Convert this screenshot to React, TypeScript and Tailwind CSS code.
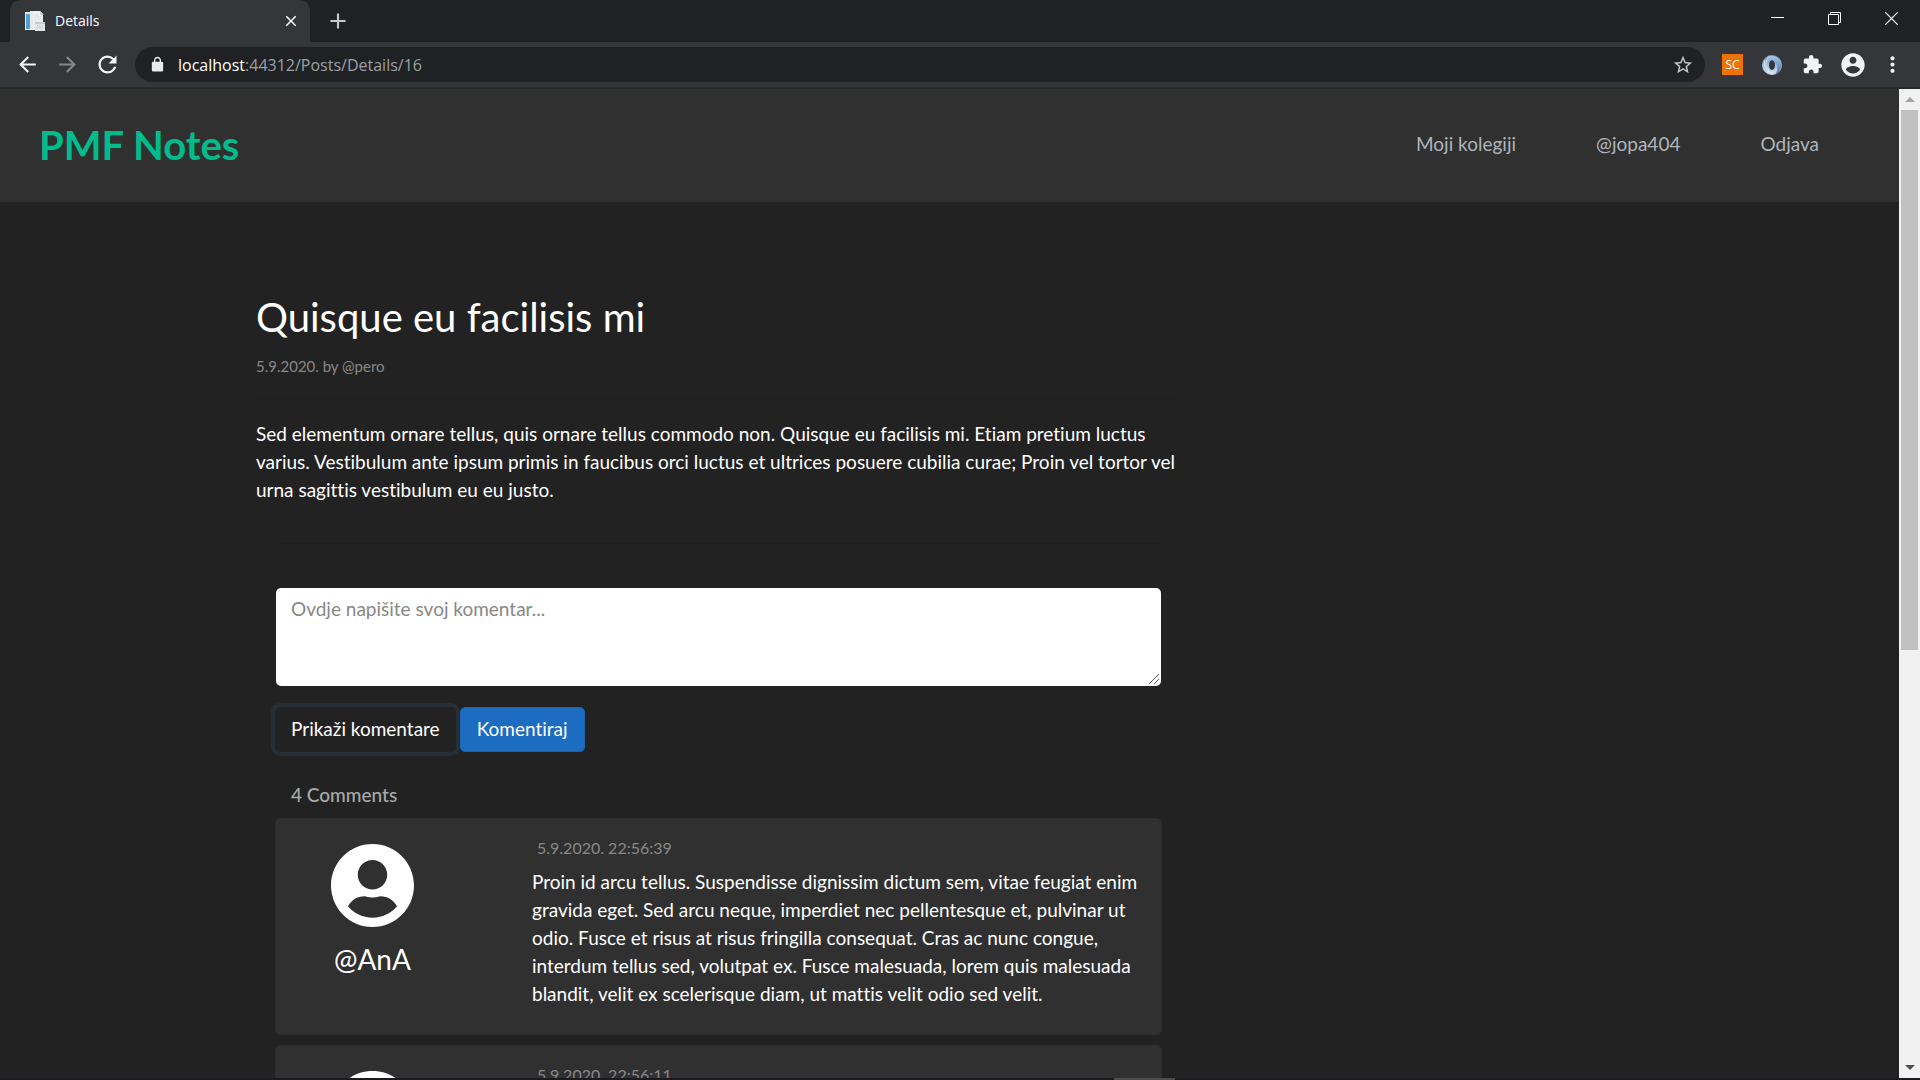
import React from "react";
import {
  MdArrowBack,
  MdArrowForward,
  MdRefresh,
  MdLock,
  MdStarBorder,
  MdExtension,
  MdMoreVert,
  MdClose,
  MdAdd,
} from "react-icons/md";

const comments = [
  {
    author: "@AnA",
    date: "5.9.2020. 22:56:39",
    text: "Proin id arcu tellus. Suspendisse dignissim dictum sem, vitae feugiat enim gravida eget. Sed arcu neque, imperdiet nec pellentesque et, pulvinar ut odio. Fusce et risus at risus fringilla consequat. Cras ac nunc congue, interdum tellus sed, volutpat ex. Fusce malesuada, lorem quis malesuada blandit, velit ex scelerisque diam, ut mattis velit odio sed velit.",
  },
  { author: "@AnA", date: "5.9.2020. 22:56:11", text: "" },
];

function Favicon() {
  return (
    <svg viewBox="0 0 20 20" className="size-5" aria-hidden="true">
      <rect x="0" y="1" width="8" height="18" fill="#e4ecf1" />
      <rect x="1" y="3" width="4" height="15" fill="#4d9fd6" />
      <path d="M5 0h10l3 3v16H5z" fill="#eeeff1" />
      <path d="M7 1v17" stroke="#dcdfe3" />
      <path d="M15 0v4h4" fill="#cfd2d6" />
      <path d="M9 4h5M9 6h8M9 8h8M9 10h2" stroke="#dcdfe3" />
      <path d="M10 11h10v9H10z" fill="#e1e3e6" />
      <path d="M10 11h10v2H10z" fill="#c6cace" />
      <path d="M12 15h6M12 17h6" stroke="#cdd1d5" />
    </svg>
  );
}

function Swirl() {
  return (
    <svg viewBox="0 0 20 20" className="size-5" aria-hidden="true">
      <defs>
        <linearGradient id="swirlA" x1="0" y1="0" x2="0" y2="1">
          <stop offset="0" stopColor="#aac6e4" />
          <stop offset="1" stopColor="#4a76a8" />
        </linearGradient>
        <linearGradient id="swirlB" x1="0" y1="0" x2="0" y2="1">
          <stop offset="0" stopColor="#6f98c6" />
          <stop offset="1" stopColor="#d5e4f3" />
        </linearGradient>
      </defs>
      <path
        fillRule="evenodd"
        d="M10 0a10 10 0 1 1 0 20a10 10 0 1 1 0-20zM10 5c-2 0-3 2.300-3 5s1 5 3 5 3-2.300 3-5-1-5-3-5z"
        fill="url(#swirlB)"
      />
      <path d="M6 1C12 0 20 3 19.600 11c-.5 4-3 7-6.600 8.300C17 15 15 9 13 8c-1-3-4-4-6-1C5 5 5 3 6 1z" fill="url(#swirlA)" />
      <path d="M3 5c-2 6 1 12 8 13M6 3c-3 4-3 9 1 12" stroke="#e3eefa" strokeWidth="1" fill="none" opacity=".7" />
    </svg>
  );
}

function TabBar() {
  return (
    <header className="flex h-[42px] shrink-0 justify-between bg-[#202124] pl-[10px]">
      <div className="flex">
        <div className="flex w-[300px] items-center rounded-t-[10px] bg-[#35363a] pr-[10px] pl-[15px]">
          <Favicon />
          <span className="ml-[10px] grow pb-[2px] text-[14px] text-white">Details</span>
          <button aria-label="Close tab" className="text-[18px] text-white">
            <MdClose className="stroke-current" />
          </button>
        </div>
        <button aria-label="New tab" className="ml-[15px] text-[26px] text-[#c4c7cb]">
          <MdAdd />
        </button>
      </div>
      <div className="flex pb-[5px] text-white">
        <button aria-label="Minimize" className="flex w-[57px] items-center justify-center">
          <svg viewBox="0 0 13 13" className="size-[13px]">
            <path d="M0 5.500h13" stroke="currentColor" />
          </svg>
        </button>
        <button aria-label="Restore" className="flex w-[57px] items-center justify-center">
          <svg viewBox="0 0 13 13" className="size-[13px]" fill="none" stroke="currentColor">
            <path d="M.5 2.500h10v10H.5zM2.500 2.500v-2h10v10h-2" />
          </svg>
        </button>
        <button aria-label="Close window" className="flex w-[57px] items-center justify-center">
          <svg viewBox="0 0 13 13" className="size-[13px]">
            <path d="M0 0l13 13M13 0L0 13" stroke="currentColor" strokeWidth="1.200" />
          </svg>
        </button>
      </div>
    </header>
  );
}

function Toolbar() {
  return (
    <div className="flex h-[47px] shrink-0 items-center border-b-2 border-[#28292b] bg-[#35363a] pl-[15px] text-[#f1f3f4]">
      <button aria-label="Back" className="mr-[15px] text-[25px]">
        <MdArrowBack />
      </button>
      <button aria-label="Forward" className="mr-[14px] text-[25px] text-[#85878a]">
        <MdArrowForward />
      </button>
      <button aria-label="Reload" className="mr-[14px] text-[27px]">
        <MdRefresh />
      </button>
      <div className="flex h-[35px] grow items-center rounded-full bg-[#202124] pr-[11px] pl-[14px]">
        <svg viewBox="0 0 24 24" className="size-[17px]" fill="#e8eaed" aria-hidden="true">
          <path d="M18 8h-1V6c0-2.760-2.240-5-5-5S7 3.240 7 6v2H6c-1.100 0-2 .9-2 2v10c0 1.100.9 2 2 2h12c1.100 0 2-.9 2-2V10c0-1.100-.9-2-2-2zM9 6c0-1.660 1.340-3 3-3s3 1.340 3 3v2H9V6z" />
        </svg>
        <div className="ml-[12px] grow text-[16px] text-[#9aa0a6]">
          <span className="text-white">localhost</span>:44312/Posts/Details/16
        </div>
        <button aria-label="Bookmark" className="text-[22px] text-[#c4c7cb]">
          <MdStarBorder />
        </button>
      </div>
      <button className="ml-[17px] flex size-[21px] items-center justify-center bg-[#ee7203] text-[12px] text-white">
        SC
      </button>
      <button aria-label="Viewer" className="ml-[19px]">
        <Swirl />
      </button>
      <button aria-label="Extensions" className="ml-[20px] text-[21px]">
        <MdExtension />
      </button>
      <button aria-label="Profile" className="ml-[16px]">
        <svg viewBox="0 0 24 24" className="size-[28px]" fill="currentColor">
          <path d="M12 2C6.480 2 2 6.480 2 12s4.480 10 10 10 10-4.480 10-10S17.520 2 12 2zm0 3c1.660 0 3 1.340 3 3s-1.340 3-3 3-3-1.340-3-3 1.340-3 3-3zm0 14.200c-2.500 0-4.710-1.280-6-3.220.03-1.990 4-3.080 6-3.080 1.990 0 5.970 1.090 6 3.080-1.290 1.940-3.500 3.220-6 3.220z" />
        </svg>
      </button>
      <button aria-label="Menu" className="mr-[15px] ml-[13px] text-[25px]">
        <MdMoreVert />
      </button>
    </div>
  );
}

function SiteNav() {
  return (
    <nav className="flex h-[113px] items-center justify-between bg-[#303030] pr-[80px] pb-[2px] pl-[39px]">
      <a href="#" className="text-[40px] font-bold text-[#00bc8c]">
        PMF Notes
      </a>
      <div className="flex gap-[80px] text-[19px] text-[#adb5bd]">
        <a href="#">Moji kolegiji</a>
        <a href="#">@jopa404</a>
        <button>Odjava</button>
      </div>
    </nav>
  );
}

function Avatar() {
  return (
    <svg viewBox="0 8 496 496" className="size-[83px]" fill="#fff" aria-hidden="true">
      <path d="M248 8C111 8 0 119 0 256s111 248 248 248 248-111 248-248S385 8 248 8zm0 96c48.600 0 88 39.400 88 88s-39.400 88-88 88-88-39.400-88-88 39.400-88 88-88zm0 344c-58.700 0-111.300-26.600-146.500-68.200 18.800-35.400 55.600-59.800 98.500-59.800 2.400 0 4.800.4 7.100 1.100 13 4.200 26.600 6.900 40.900 6.900 14.300 0 28-2.700 40.900-6.900 2.300-.7 4.700-1.100 7.100-1.100 42.900 0 79.700 24.400 98.500 59.800C359.300 421.400 306.700 448 248 448z" />
    </svg>
  );
}

function Scrollbar() {
  return (
    <div className="flex w-[21px] shrink-0 flex-col bg-[#f1f1f1]" aria-hidden="true">
      <div className="flex h-[21px] items-center justify-center">
        <svg viewBox="0 0 10 5" className="h-[5px] w-[10px]">
          <path d="M0 5l5-5 5 5z" fill="#a3a3a3" />
        </svg>
      </div>
      <div className="grow px-[2px]">
        <div className="h-[57%] bg-[#c1c1c1]" />
      </div>
      <div className="flex h-[21px] items-center justify-center">
        <svg viewBox="0 0 10 5" className="h-[5px] w-[10px]">
          <path d="M0 0l5 5 5-5z" fill="#505050" />
        </svg>
      </div>
    </div>
  );
}

export default function App() {
  return (
    <div className="flex h-screen flex-col overflow-hidden bg-[#222] font-['Open_Sans',sans-serif]">
      <TabBar />
      <Toolbar />
      <div className="flex min-h-0 grow">
        <div className="min-w-0 grow overflow-hidden font-['Lato',sans-serif] text-white [font-variant-ligatures:none]">
          <SiteNav />
          <main className="mx-auto max-w-[1387px] pt-[87px]">
            <article className="w-2/3">
              <h1 className="text-[40px] leading-[56px]">Quisque eu facilisis mi</h1>
              <p className="mt-[10px] text-[15px] leading-[22px] text-[#888]">5.9.2020. by @pero</p>
              <hr className="mt-[21px] border-[#1f1f1f]" />
              <p className="mt-[21px] text-[19px] leading-[28px]">
                Sed elementum ornare tellus, quis ornare tellus commodo non. Quisque eu facilisis mi. Etiam pretium
                luctus varius. Vestibulum ante ipsum primis in faucibus orci luctus et ultrices posuere cubilia curae;
                Proin vel tortor vel urna sagittis vestibulum eu eu justo.
              </p>
              <section className="mt-[39px] px-[19px] text-[19px] leading-[28px]">
                <hr className="border-[#1f1f1f]" />
                <hr className="mt-5 border-[#1f1f1f]" />
                <div className="relative mx-px mt-[23px]">
                  <textarea
                    aria-label="Komentar"
                    placeholder="Ovdje napišite svoj komentar..."
                    className="block h-[98px] w-full resize-none rounded-[5px] bg-white px-[15px] py-[7px] text-[#444] placeholder:text-[#888]"
                  />
                  <svg
                    viewBox="0 0 10 10"
                    className="pointer-events-none absolute right-[2px] bottom-[2px] size-[10px]"
                    aria-hidden="true"
                  >
                    <path d="M0 10L10 0M5 10l5-5" stroke="#555" />
                  </svg>
                </div>
                <div className="mt-[21px] flex gap-1">
                  <button className="h-[45px] rounded-[5px] px-4 pb-[2px] ring-4 ring-[#262e36]">
                    Prikaži komentare
                  </button>
                  <button className="h-[45px] rounded-[5px] border border-[#1a63b0] bg-[#1c6cc1] px-4 pb-[2px]">
                    Komentiraj
                  </button>
                </div>
                <h2 className="mt-[29px] px-4 font-medium text-[#aaa]">4 Comments</h2>
                <ul className="mt-[9px] flex flex-col gap-[10px]">
                  {comments.map((c) => (
                    <li key={c.date} className="flex min-h-[217px] rounded-[5px] border border-[#2d2d2d] bg-[#303030]">
                      <div className="flex w-[193px] shrink-0 flex-col items-center pt-[25px]">
                        <Avatar />
                        <span className="mt-[14px] text-[28px] leading-[36px]">{c.author}</span>
                      </div>
                      <div className="min-w-0 grow pt-[15px] pr-[15px] pl-[63px]">
                        <p className="pl-[5px] text-[16px] text-[#888]">{c.date}</p>
                        <p className="mt-[6px]">{c.text}</p>
                      </div>
                    </li>
                  ))}
                </ul>
              </section>
            </article>
          </main>
        </div>
        <Scrollbar />
      </div>
      <footer className="flex h-[2px] shrink-0 justify-center bg-[#1b1b1d]">
        <div className="ml-[369px] w-[61px] bg-[#4c4c4c]" />
      </footer>
    </div>
  );
}
